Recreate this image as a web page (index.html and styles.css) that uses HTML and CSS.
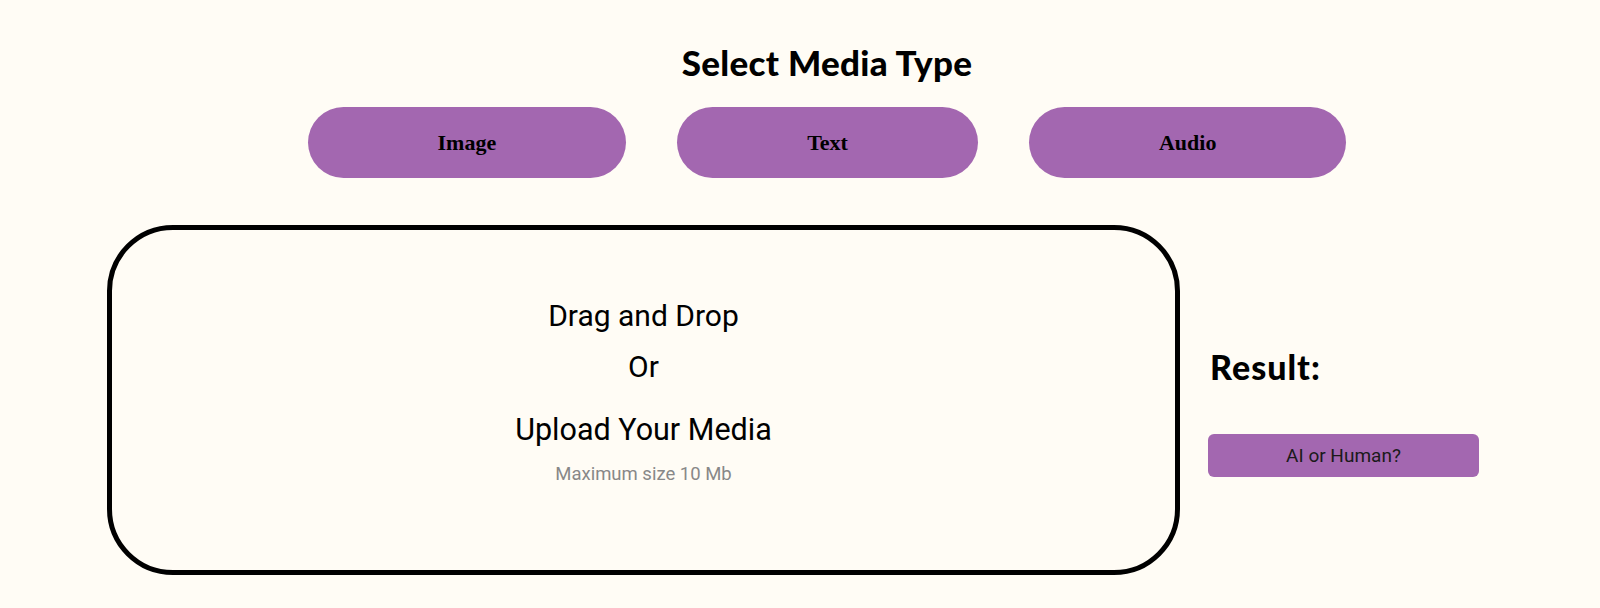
FILE: index.html
```html
<!DOCTYPE html>
<html lang="en">
<head>
<meta charset="utf-8">
<title>Select Media Type</title>
<link rel="stylesheet" href="styles.css">
</head>
<body>
<main class="page">
  <section class="selector">
    <h1 class="title">Select Media Type</h1>
    <div class="types">
      <button class="type-btn">Image</button>
      <button class="type-btn">Text</button>
      <button class="type-btn">Audio</button>
    </div>
  </section>
  <section class="work">
    <div class="dropzone">
      <p class="drop-line">Drag and Drop</p>
      <p class="drop-or">Or</p>
      <p class="drop-upload">Upload Your Media</p>
      <p class="drop-note">Maximum size 10 Mb</p>
    </div>
    <aside class="result">
      <h2 class="result-title">Result:</h2>
      <button class="check-btn">AI or Human?</button>
    </aside>
  </section>
</main>
</body>
</html>
```

FILE: styles.css
```css
html, body {
  margin: 0;
  padding: 0;
  background: #fffcf5;
}

.page {
  width: 1600px;
  height: 608px;
  overflow: hidden;
}

.selector {
  padding-left: 54px;
  display: flex;
  flex-direction: column;
  align-items: center;
}

.title {
  margin: 42px 0 0 0;
  font-family: Lato, "Open Sans", sans-serif;
  font-weight: 900;
  font-size: 35px;
  line-height: 40px;
  color: #000;
  letter-spacing: 0.3px;
}

.types {
  margin-top: 25px;
  display: flex;
  gap: 51px;
}

.type-btn {
  height: 71px;
  padding: 0 130px;
  border: none;
  border-radius: 36px;
  background: #a367b0;
  color: #000;
  font-family: "Liberation Serif", "Times New Roman", serif;
  font-weight: bold;
  font-size: 22px;
  cursor: pointer;
}

.work {
  margin-top: 47px;
  padding-left: 107px;
  display: flex;
  align-items: flex-start;
  gap: 28px;
}

.dropzone {
  box-sizing: border-box;
  width: 1073px;
  height: 350px;
  border: 5px solid #000;
  border-radius: 66px;
  display: flex;
  flex-direction: column;
  align-items: center;
  padding-top: 69px;
  font-family: Roboto, "Noto Sans", sans-serif;
  color: #000;
}

.dropzone p {
  margin: 0;
}

.drop-line,
.drop-or {
  font-size: 30px;
  line-height: 33px;
}

.drop-upload {
  font-size: 30.5px;
  line-height: 33px;
}

.dropzone .drop-or {
  margin-top: 18px;
}

.dropzone .drop-upload {
  margin-top: 30px;
}

.dropzone .drop-note {
  margin-top: 17px;
  font-size: 18.5px;
  line-height: 22px;
  color: #888;
}

.result {
  margin-top: 123px;
  display: flex;
  flex-direction: column;
}

.result-title {
  margin: 0 0 0 2px;
  font-family: Lato, "Open Sans", sans-serif;
  font-weight: 900;
  font-size: 34px;
  line-height: 38px;
  letter-spacing: 1px;
  color: #000;
}

.check-btn {
  margin-top: 48px;
  width: 271px;
  height: 43px;
  border: none;
  border-radius: 6px;
  background: #a367b0;
  color: #1a1a1a;
  font-family: Roboto, "Noto Sans", sans-serif;
  font-size: 19px;
  cursor: pointer;
}
```
